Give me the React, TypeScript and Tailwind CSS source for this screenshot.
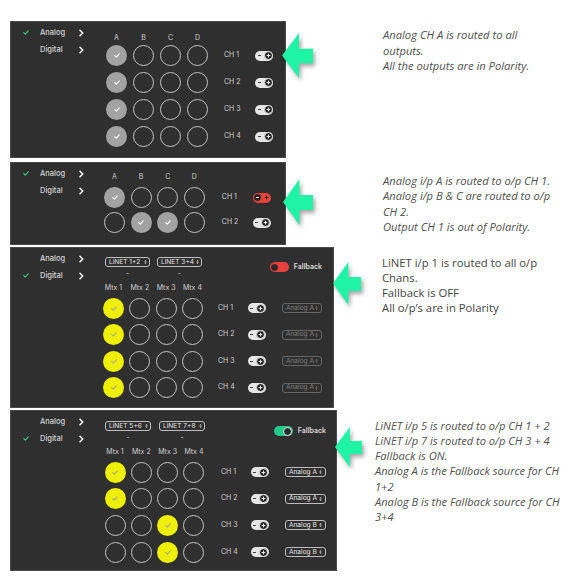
import React from 'react';

const ui = "font-['Inter',sans-serif]";
const note = "font-['Open_Sans',sans-serif]";

function Check({ className }: { className: string }) {
  return (
    <svg viewBox="0 0 10 8" className={className} fill="none" stroke="currentColor" strokeWidth={1.8} strokeLinecap="round" strokeLinejoin="round">
      <path d="M1.2 4.3 3.8 6.8 8.8 1.2" />
    </svg>
  );
}

function Chevron() {
  return (
    <svg viewBox="0 0 6 9" className="w-[5px] h-[8px]" fill="none" stroke="white" strokeWidth={1.8} strokeLinecap="round" strokeLinejoin="round">
      <path d="M1.2 1.2 4.5 4.5 1.2 7.8" />
    </svg>
  );
}

function Plus({ className }: { className: string }) {
  return (
    <svg viewBox="0 0 6 6" className={className} fill="none" stroke="currentColor" strokeWidth={1.1}>
      <path d="M3 0.8v4.4M0.8 3h4.4" />
    </svg>
  );
}

function Minus({ className }: { className: string }) {
  return (
    <svg viewBox="0 0 6 6" className={className} fill="none" stroke="currentColor" strokeWidth={1.1}>
      <path d="M1.2 3h3.6" />
    </svg>
  );
}

function UpDown() {
  return (
    <svg viewBox="0 0 4 7" className="w-[3px] h-[6px] shrink-0" fill="currentColor">
      <path d="M0.4 2.9 2 0.7 3.6 2.9Z M0.4 4.1 2 6.3 3.6 4.1Z" />
    </svg>
  );
}

// Analog / Digital side menu
function Menu({ active, width }: { active: 'Analog' | 'Digital'; width: string }) {
  return (
    <div className={`shrink-0 pt-[2px] ${width}`}>
      {['Analog', 'Digital'].map((item) => (
        <div key={item} className="flex items-center h-[17px]">
          <span className="w-[29px] pl-[12px] flex">
            {item === active && <Check className="w-[6px] h-[5px] text-[#2fd27a]" />}
          </span>
          <span className="w-[39px] text-[7.5px] font-medium text-[#d6d6d6]">{item}</span>
          <Chevron />
        </div>
      ))}
    </div>
  );
}

function Dot({ on, yellow }: { on: boolean; yellow?: boolean }) {
  if (!on) return <span className="w-[21px] h-[21px] rounded-full border border-[#c4c4c4] shrink-0" />;
  return (
    <span
      className={`w-[21px] h-[21px] rounded-full shrink-0 flex items-center justify-center ${
        yellow ? 'bg-[#eef000] text-[#a9a98c]' : 'bg-[#a2a2a2] text-white'
      }`}
    >
      <Check className="w-[6px] h-[5px]" />
    </span>
  );
}

function Polarity({ inverted }: { inverted?: boolean }) {
  if (inverted) {
    return (
      <span className="relative w-[18px] h-[10px] rounded-full bg-[#e8423b] shrink-0">
        <span className="absolute left-[0.5px] top-[0.5px] w-[9px] h-[9px] rounded-full bg-[#262626] border border-[#e8423b] flex items-center justify-center text-white">
          <Minus className="w-[5px] h-[5px]" />
        </span>
        <Plus className="absolute right-[2px] top-[2.5px] w-[5px] h-[5px] text-[#2a2a2a]" />
      </span>
    );
  }
  return (
    <span className="relative w-[18px] h-[10px] rounded-full bg-[#e6e6e6] shrink-0">
      <Minus className="absolute left-[1.5px] top-[2.5px] w-[5px] h-[5px] text-[#333]" />
      <span className="absolute right-[0.5px] top-[0.5px] w-[9px] h-[9px] rounded-full bg-[#262626] border border-[#e6e6e6] flex items-center justify-center text-white">
        <Plus className="w-[5px] h-[5px]" />
      </span>
    </span>
  );
}

function Select({ label, dim, width }: { label: string; dim?: boolean; width: string }) {
  return (
    <div
      className={`h-[10px] rounded-[3px] border flex items-center justify-between pl-[3px] pr-[2.5px] shrink-0 ${width} ${
        dim ? 'border-[#666] text-[#7c7c7c]' : 'border-[#bdbdbd] text-[#e4e4e4]'
      }`}
    >
      <span className="text-[6.6px] leading-none whitespace-nowrap">{label}</span>
      <UpDown />
    </div>
  );
}

function Fallback({ on }: { on?: boolean }) {
  return (
    <div className="flex items-center gap-[5px]">
      <span className={`relative w-[19px] h-[10px] rounded-full ${on ? 'bg-[#21c98b]' : 'bg-[#e8403c]'}`}>
        <span
          className={`absolute top-[0.5px] w-[9px] h-[9px] rounded-full bg-[#2a2a2a] border ${
            on ? 'right-[0.5px] border-[#e8e8e8]' : 'left-[0.5px] border-[#e8403c]'
          }`}
        />
      </span>
      <span className="text-[7px] font-semibold text-[#dadada]">Fallback</span>
    </div>
  );
}

function Arrow({ className }: { className: string }) {
  return (
    <svg viewBox="0 0 31 46" preserveAspectRatio="none" className={`absolute drop-shadow-[2px_3px_2px_rgba(0,0,0,0.35)] ${className}`}>
      <polygon points="0,23 17,0 17,16 31,16 31,31 17,31 17,46" fill="#1ff3a6" />
    </svg>
  );
}

function Note({ lines, italic, className }: { lines: string[]; italic?: boolean; className: string }) {
  return (
    <div className={`${note} ${italic ? 'italic text-[#505050]' : 'text-[#444]'} ${className}`}>
      {lines.map((l, i) => (
        <div key={i} className="whitespace-nowrap">{l}</div>
      ))}
    </div>
  );
}

const cols = ['A', 'B', 'C', 'D'];
const mtx = ['Mtx 1', 'Mtx 2', 'Mtx 3', 'Mtx 4'];

export default function App() {
  const p1 = [
    [true, false, false, false],
    [true, false, false, false],
    [true, false, false, false],
    [true, false, false, false],
  ];
  const p2 = [
    [true, false, false, false],
    [false, true, true, false],
  ];
  const p3 = [
    [true, false, false, false],
    [true, false, false, false],
    [true, false, false, false],
    [true, false, false, false],
  ];
  const p4 = [
    [true, false, false, false],
    [true, false, false, false],
    [false, false, true, false],
    [false, false, true, false],
  ];
  const p4src = ['Analog A', 'Analog A', 'Analog B', 'Analog B'];

  return (
    <div className={`w-[569px] h-[576px] bg-white pt-[21px] flex flex-col overflow-hidden ${ui}`}>
      {/* Analog, all outputs */}
      <div className="relative flex items-start pl-[10px]">
        <div className="flex w-[276px] h-[137px] border border-[#4a4a4a] bg-[#2f2f2f] shrink-0">
          <Menu active="Analog" width="w-[95px]" />
          <div className="pt-[11px]">
            <div className="flex gap-[6px]">
              {cols.map((c) => (
                <span key={c} className="w-[21px] text-center text-[7px] leading-[10px] text-[#d0d0d0]">{c}</span>
              ))}
            </div>
            <div className="mt-[2px] flex flex-col gap-[6px]">
              {p1.map((r, i) => (
                <div key={i} className="flex items-center">
                  <div className="flex gap-[6px]">
                    {r.map((on, j) => <Dot key={j} on={on} />)}
                  </div>
                  <span className="ml-[16px] w-[31px] text-[7px] text-[#d0d0d0]">CH {i + 1}</span>
                  <Polarity />
                </div>
              ))}
            </div>
          </div>
        </div>
        <Note
          italic
          className="ml-[97px] mt-[6px] text-[11.2px] leading-[15.5px]"
          lines={['Analog CH A is routed to all', 'outputs.', 'All the outputs are in Polarity.']}
        />
        <Arrow className="left-[282px] top-[12px] w-[31px] h-[45px]" />
      </div>

      {/* Analog, split */}
      <div className="relative flex items-start pl-[10px] mt-[4px]">
        <div className="flex w-[276px] h-[83px] border border-[#4a4a4a] bg-[#2f2f2f] shrink-0">
          <Menu active="Analog" width="w-[93px]" />
          <div className="pt-[9px]">
            <div className="flex gap-[5.6px]">
              {cols.map((c) => (
                <span key={c} className="w-[21px] text-center text-[7px] leading-[10px] text-[#d0d0d0]">{c}</span>
              ))}
            </div>
            <div className="mt-[5px] flex flex-col gap-[4px]">
              {p2.map((r, i) => (
                <div key={i} className="flex items-center">
                  <div className="flex gap-[5.6px]">
                    {r.map((on, j) => <Dot key={j} on={on} />)}
                  </div>
                  <span className="ml-[17px] w-[31px] text-[7px] text-[#d0d0d0]">CH {i + 1}</span>
                  <Polarity inverted={i === 0} />
                </div>
              ))}
            </div>
          </div>
        </div>
        <Note
          italic
          className="ml-[97px] mt-[11px] text-[11.2px] leading-[15.3px]"
          lines={[
            'Analog i/p A is routed to o/p CH 1.',
            'Analog i/p B & C are routed to o/p',
            'CH 2.',
            'Output CH 1 is out of Polarity.',
          ]}
        />
        <Arrow className="left-[283px] top-[17px] w-[30px] h-[46px]" />
      </div>

      {/* Digital, fallback off */}
      <div className="relative flex items-start pl-[10px] mt-[2px]">
        <div className="flex w-[324px] h-[161px] border border-[#4a4a4a] bg-[#2f2f2f] shrink-0">
          <Menu active="Digital" width="w-[92px]" />
          <div className="flex-1 pt-[9px] pr-[11px]">
            <div className="flex items-start">
              <div className="pl-[2px] flex gap-[7px]">
                {['LiNET 1+2', 'LiNET 3+4'].map((b) => (
                  <div key={b} className="flex flex-col items-center">
                    <Select label={b} width="w-[45px]" />
                    <span className="mt-[2px] text-[7px] leading-[10px] text-[#d0d0d0]">-</span>
                  </div>
                ))}
              </div>
              <div className="ml-auto mt-[5px]">
                <Fallback />
              </div>
            </div>
            <div className="mt-[4px] flex gap-[5.3px]">
              {mtx.map((m) => (
                <span key={m} className="w-[21px] text-center text-[7px] leading-[10px] text-[#d0d0d0] whitespace-nowrap">{m}</span>
              ))}
            </div>
            <div className="mt-[4.5px] flex flex-col gap-[5.5px]">
              {p3.map((r, i) => (
                <div key={i} className="flex items-center">
                  <div className="flex gap-[5.3px]">
                    {r.map((on, j) => <Dot key={j} on={on} yellow />)}
                  </div>
                  <span className="ml-[15px] w-[30px] text-[7px] text-[#d0d0d0]">CH {i + 1}</span>
                  <Polarity />
                  <div className="ml-[16px]">
                    <Select label="Analog A" dim width="w-[40px]" />
                  </div>
                </div>
              ))}
            </div>
          </div>
        </div>
        <Note
          className="ml-[48px] mt-[7.5px] text-[11.3px] leading-[15px]"
          lines={['LiNET i/p 1 is routed to all o/p', 'Chans.', 'Fallback is OFF', 'All o/p’s are in Polarity']}
        />
        <Arrow className="left-[333px] top-[15px] w-[28px] h-[43px]" />
      </div>

      {/* Digital, fallback on */}
      <div className="relative flex items-start pl-[10px] mt-[2px]">
        <div className="flex w-[327px] h-[161px] border border-[#4a4a4a] bg-[#2f2f2f] shrink-0">
          <Menu active="Digital" width="w-[93.5px]" />
          <div className="flex-1 pt-[10px] pr-[10px]">
            <div className="flex items-start">
              <div className="pl-[0.5px] flex gap-[8px]">
                {['LiNET 5+6', 'LiNET 7+8'].map((b) => (
                  <div key={b} className="flex flex-col items-center">
                    <Select label={b} width="w-[46px]" />
                    <span className="mt-[2px] text-[7px] leading-[10px] text-[#d0d0d0]">-</span>
                  </div>
                ))}
              </div>
              <div className="ml-auto mt-[5px]">
                <Fallback on />
              </div>
            </div>
            <div className="mt-[4px] flex gap-[5.3px]">
              {mtx.map((m) => (
                <span key={m} className="w-[21px] text-center text-[7px] leading-[10px] text-[#d0d0d0] whitespace-nowrap">{m}</span>
              ))}
            </div>
            <div className="mt-[4.5px] flex flex-col gap-[5.7px]">
              {p4.map((r, i) => (
                <div key={i} className="flex items-center">
                  <div className="flex gap-[5.3px]">
                    {r.map((on, j) => <Dot key={j} on={on} yellow />)}
                  </div>
                  <span className="ml-[16.5px] w-[30px] text-[7px] text-[#d0d0d0]">CH {i + 1}</span>
                  <Polarity />
                  <div className="ml-[16px]">
                    <Select label={p4src[i]} width="w-[41px]" />
                  </div>
                </div>
              ))}
            </div>
          </div>
        </div>
        <Note
          italic
          className="ml-[38px] mt-[7.5px] text-[11.1px] leading-[15.3px]"
          lines={[
            'LiNET i/p 5 is routed to o/p CH 1 + 2',
            'LiNET i/p 7 is routed to o/p CH 3 + 4',
            'Fallback is ON.',
            'Analog A is the Fallback source for CH',
            '1+2',
            'Analog B is the Fallback source for CH',
            '3+4',
          ]}
        />
        <Arrow className="left-[335px] top-[17px] w-[27px] h-[40px]" />
      </div>
    </div>
  );
}
